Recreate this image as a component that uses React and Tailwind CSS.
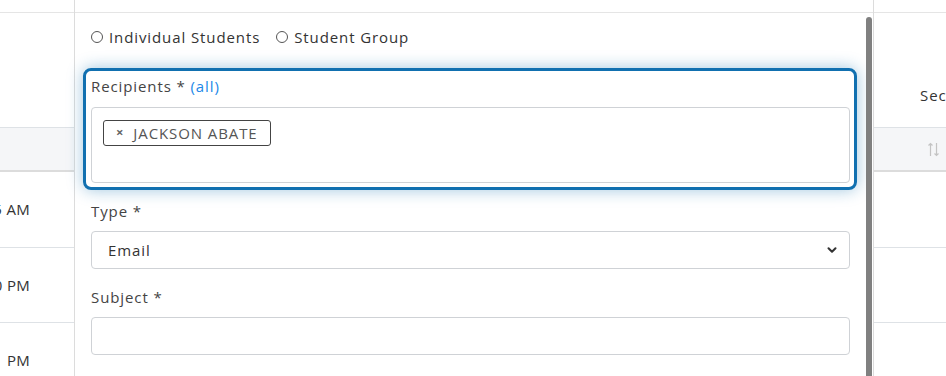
import { ChevronDown } from 'lucide-react';

const font = { fontFamily: '"Open Sans", "Noto Sans", sans-serif' };

function TimeRow({ label, h = 'h-[75px]' }) {
  return (
    <div className={`${h} shrink-0 border-b border-[#dee2e6] flex items-center justify-end pr-[44px] whitespace-nowrap text-[15px] text-[#333] tracking-[0.3px]`}>
      {label}
    </div>
  );
}

function Radio({ label }) {
  return (
    <label className="flex items-center gap-[6px]">
      <span className="w-[12px] h-[12px] rounded-full border border-[#555] bg-white" />
      <span>{label}</span>
    </label>
  );
}

function SortIcon() {
  return (
    <svg width="11" height="15" viewBox="0 0 11 15" fill="none" stroke="#c4c4c4" strokeWidth="1.2">
      <path d="M2.5 14V1.5M0.5 3.5L2.5 1.5L4.5 3.5" />
      <path d="M8.5 1V13.5M6.5 11.5L8.5 13.5L10.5 11.5" />
    </svg>
  );
}

export default function App() {
  return (
    <div
      className="w-[946px] h-[376px] overflow-hidden bg-white flex text-[#444] tracking-[0.9px]"
      style={font}
    >
      {/* table behind, left part */}
      <div className="w-[74px] shrink-0 overflow-hidden flex flex-col">
        <div className="h-[13px] shrink-0 border-b border-[#e5e5e5]" />
        <div className="h-[114px] shrink-0" />
        <div className="h-[45px] shrink-0 bg-[#f5f6f8] border-t border-[#dee2e6] border-b-2 border-b-[#dcdcdc]" />
        <TimeRow label="10:15 AM" h="h-[76px]" />
        <TimeRow label="12:30 PM" />
        <TimeRow label="04:11 PM" />
      </div>

      {/* modal */}
      <div className="w-[800px] shrink-0 border-x border-[#dcdcdc] flex flex-col">
        <div className="h-[13px] shrink-0 border-b border-[#e5e5e5]" />
        <div className="flex flex-1">
          <div className="flex-1 pl-[8px] pr-[9px]">
            <div className="flex items-center gap-[16px] h-[48px] pl-[8px] text-[15px] text-[#333]">
              <Radio label="Individual Students" />
              <Radio label="Student Group" />
            </div>
            <div className="mt-[7px] border-[3px] border-[#1170b0] rounded-[8px] shadow-[0_0_16px_rgba(17,112,176,0.4)] pl-[5px] pr-[4px] pt-[1px] pb-[4px]">
              <div className="text-[15px] h-[28px] flex items-center">
                Recipients *&nbsp;<span className="text-[#2188e8]">(all)</span>
              </div>
              <div className="mt-[7px] h-[76px] border border-[#cfd2d6] rounded-[4px] px-[11px] pt-[12px] flex items-start">
                <div className="flex items-center h-[26px] border border-[#444] rounded-[3px] pl-[12px] pr-[12px] gap-[9px] text-[15px] text-[#555]">
                  <span className="text-[13px] font-bold text-[#666]">×</span>
                  <span>JACKSON ABATE</span>
                </div>
              </div>
            </div>
            <div className="pl-[8px] pr-[7px]">
              <div className="text-[15px] h-[24px] mt-[9px] flex items-center">Type *</div>
              <div className="mt-[8px] h-[38px] border border-[#cfd2d6] rounded-[4px] flex items-center justify-between pl-[16px] pr-[10px] text-[15px] text-[#333]">
                <span>Email</span>
                <ChevronDown size={14} strokeWidth={3.5} className="text-[#333]" />
              </div>
              <div className="text-[15px] h-[24px] mt-[16px] flex items-center">Subject *</div>
              <div className="mt-[8px] h-[38px] border border-[#cfd2d6] rounded-[4px]" />
            </div>
          </div>
          <div className="w-[6px] mt-[4px] mr-[1px] bg-[#808080] rounded-t-[3px]" />
        </div>
      </div>

      {/* table behind, right part */}
      <div className="flex-1 overflow-hidden flex flex-col whitespace-nowrap">
        <div className="h-[13px] shrink-0 border-b border-[#e5e5e5]" />
        <div className="h-[114px] shrink-0 flex items-center pl-[46px] pt-[50px] text-[15px] text-[#333]">
          Section
        </div>
        <div className="h-[45px] shrink-0 bg-[#f5f6f8] border-t border-[#dee2e6] border-b-2 border-b-[#dcdcdc] flex items-center pl-[54px]">
          <SortIcon />
        </div>
        <div className="h-[76px] shrink-0 border-b border-[#dee2e6]" />
        <div className="h-[75px] shrink-0 border-b border-[#dee2e6]" />
        <div className="h-[75px] shrink-0" />
      </div>
    </div>
  );
}
